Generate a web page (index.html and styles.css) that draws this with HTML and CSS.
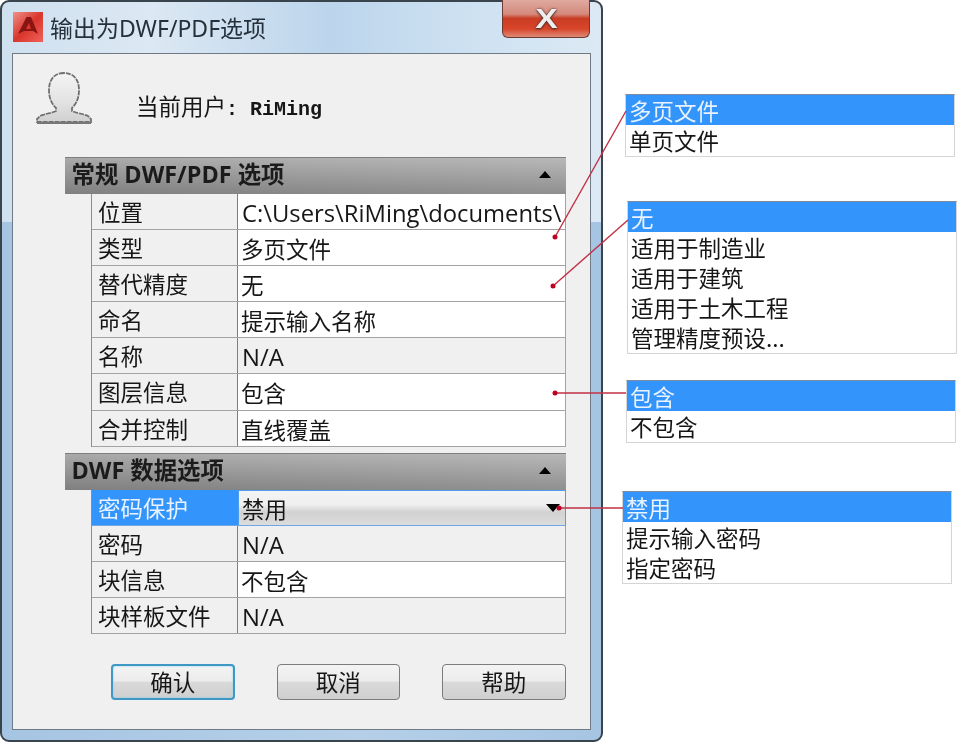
FILE: index.html
```html
<!DOCTYPE html>
<html lang="zh-CN">
<head>
<meta charset="utf-8">
<title>输出为DWF/PDF选项</title>
<link rel="stylesheet" href="styles.css">
</head>
<body>
<div class="page">
  <div class="window">
    <div class="titlebar">
      <svg class="logo" width="30" height="30" viewBox="0 0 30 30">
        <defs><linearGradient id="lg" x1="0" y1="0" x2="1" y2="1"><stop offset="0" stop-color="#f0928a"/><stop offset=".5" stop-color="#d9362c"/><stop offset="1" stop-color="#f0615a"/></linearGradient></defs>
        <rect width="30" height="30" fill="url(#lg)"/>
        <path d="M5 22 L13.5 5 L18 5 L25 22 L20 19 L11 19Z" fill="#8a1414"/>
        <path d="M13 17 L16 11 L18 17Z" fill="#d9362c"/>
      </svg>
      <span class="title">输出为DWF/PDF选项</span>
      <div class="close"><span class="close-x">X</span></div>
    </div>
    <div class="panel">
      <div class="user">
        <svg class="avatar" width="56" height="54" viewBox="0 0 56 54">
          <defs><linearGradient id="av" x1="0" y1="0" x2="0" y2="1"><stop offset="0" stop-color="#f4f4f4"/><stop offset=".6" stop-color="#e2e2e2"/><stop offset="1" stop-color="#d0d0d0"/></linearGradient></defs>
          <path d="M28 1 C18 1 13 8 13 18 C13 28 17 33 20 36 L20 39 C16 41 8 42 4 44 L1 47 L1 50 L55 50 L55 47 L52 44 C48 42 40 41 36 39 L36 36 C39 33 43 28 43 18 C43 8 38 1 28 1Z" fill="url(#av)" stroke="#707070" stroke-width="1.8" stroke-dasharray="5 1"/>
          <rect x="1" y="50" width="54" height="2" fill="#777"/>
        </svg>
        <div class="user-text">当前用户<span class="mono">: RiMing</span></div>
      </div>

      <section class="group">
        <div class="group-head"><span>常规 DWF/PDF 选项</span><i class="tri-up"></i></div>
        <div class="rows">
          <div class="row"><div class="k">位置</div><div class="v clip"><span class="lat">C:\Users\RiMing\documents\</span></div></div>
          <div class="row"><div class="k">类型</div><div class="v">多页文件</div></div>
          <div class="row"><div class="k">替代精度</div><div class="v">无</div></div>
          <div class="row"><div class="k">命名</div><div class="v">提示输入名称</div></div>
          <div class="row"><div class="k">名称</div><div class="v off"><span class="lat">N/A</span></div></div>
          <div class="row"><div class="k">图层信息</div><div class="v">包含</div></div>
          <div class="row"><div class="k">合并控制</div><div class="v">直线覆盖</div></div>
        </div>
      </section>

      <section class="group second">
        <div class="group-head"><span>DWF 数据选项</span><i class="tri-up"></i></div>
        <div class="rows">
          <div class="row active"><div class="k">密码保护</div><div class="v">禁用<i class="tri-down"></i></div></div>
          <div class="row"><div class="k">密码</div><div class="v off"><span class="lat">N/A</span></div></div>
          <div class="row"><div class="k">块信息</div><div class="v">不包含</div></div>
          <div class="row"><div class="k">块样板文件</div><div class="v off"><span class="lat">N/A</span></div></div>
        </div>
      </section>

      <div class="buttons">
        <button class="btn primary">确认</button>
        <button class="btn">取消</button>
        <button class="btn">帮助</button>
      </div>
    </div>
  </div>

  <div class="callouts">
    <ul class="list l1"><li class="sel">多页文件</li><li>单页文件</li></ul>
    <ul class="list l2"><li class="sel">无</li><li>适用于制造业</li><li>适用于建筑</li><li>适用于土木工程</li><li>管理精度预设...</li></ul>
    <ul class="list l3"><li class="sel">包含</li><li>不包含</li></ul>
    <ul class="list l4"><li class="sel">禁用</li><li>提示输入密码</li><li>指定密码</li></ul>
  </div>

  <svg class="leaders" width="957" height="743" viewBox="0 0 957 743">
    <g stroke="#c23044" stroke-width="1.4" fill="none">
      <path d="M555 237 L626 111"/>
      <path d="M553 286 L628 220"/>
      <path d="M555 393 L626 393"/>
      <path d="M559 508 L623 508"/>
    </g>
    <g fill="#c00020">
      <circle cx="555" cy="237" r="2.5"/>
      <circle cx="553" cy="286" r="2.5"/>
      <circle cx="555" cy="393" r="2.5"/>
      <circle cx="559" cy="508" r="2.5"/>
    </g>
  </svg>
</div>
</body>
</html>
```
FILE: styles.css
```css
* { box-sizing: border-box; }
html, body { margin: 0; padding: 0; background: #fff; }
body { font-family: "Noto Sans CJK SC", sans-serif; color: #161616; }
.page { position: relative; width: 957px; height: 743px; display: flex; overflow: hidden; filter: blur(0.35px); }

.window {
  position: relative;
  flex: none;
  width: 603px;
  height: 742px;
  border: 2px solid #39444d;
  border-radius: 9px;
  padding: 0 10px;
  background:
    linear-gradient(90deg, #cfe0ef 0, #dce8f3 25%, #bcd5ec 55%, #cfe2f2 80%, #dce9f4 100%) top / 100% 220px no-repeat,
    linear-gradient(90deg, #a6c5e3, #b5cfe8 60%, #a6c5e3);
}
.titlebar { display: flex; align-items: center; height: 51px; padding: 0 0 1px 1px; }
.logo { flex: none; }
.title { margin-left: 7px; font-size: 23px; color: #26303a; font-family: "Noto Sans", "Noto Sans CJK SC", sans-serif; }
.close {
  position: absolute;
  top: -2px;
  right: 11px;
  width: 88px;
  height: 38px;
  border: 1.5px solid #6d3a34;
  border-top: 0;
  border-radius: 0 0 6px 6px;
  background: linear-gradient(180deg, #dfa99f 0, #d58a7c 38%, #c93c24 50%, #d8452a 78%, #dc8a78 100%);
  display: flex;
  align-items: center;
  justify-content: center;
}
.close-x {
  font: bold 28px/1 "Liberation Sans", sans-serif;
  color: #eeeeee;
  text-shadow: 0 0 2px #4a2a26, 0 1px 2px #4a2a26;
  transform: scaleX(1.2);
}

.panel {
  height: 677px;
  border: 1.5px solid #6e7b86;
  background: #f0f0f0;
  padding: 0 24px 0 52px;
  display: flex;
  flex-direction: column;
}
.user { display: flex; align-items: flex-start; height: 103px; margin-left: -29px; padding-top: 18px; }
.avatar { flex: none; }
.user-text { margin-left: 44px; margin-top: 17px; font-size: 22.5px; line-height: 32px; white-space: pre; }
.mono { font-family: "Liberation Mono", monospace; font-size: 20px; font-weight: 700; }

.group-head {
  height: 37px;
  display: flex;
  align-items: center;
  justify-content: space-between;
  padding: 0 15px 6px 6.5px;
  font-weight: 700;
  font-size: 23.4px;
  color: #1b1b1b;
  font-family: "Open Sans", "Noto Sans CJK SC", sans-serif;
  border-top: 1px solid #7e7e7e;
  background:
    linear-gradient(90deg, rgba(0,0,0,.05), rgba(255,255,255,.08)),
    linear-gradient(180deg, #b2b2b2, #868686);
}
.tri-up { margin-top: 3px; border: 6px solid transparent; border-top: 0; border-bottom: 7px solid #000; }
.rows { margin-left: 26px; border-left: 1.5px solid #8e8e8e; }
.row {
  display: grid;
  grid-template-columns: 146px 1fr;
  height: 36.1px;
  border-bottom: 1.5px solid #a3a3a3;
  font-size: 22.5px;
}
.k { padding-left: 6px; line-height: 34px; background: #f0f0f0; border-right: 1.5px solid #7e7e7e; white-space: nowrap; }
.v { position: relative; padding-left: 3px; line-height: 36px; background: #fff; border-right: 1.5px solid #a3a3a3; white-space: nowrap; overflow: hidden; }
.v.off { background: #f0f0f0; }
.lat { margin-left: 1px; font-family: "Open Sans", sans-serif; font-size: 23.8px; }
.second { margin-top: 6px; }
.row.active { border-bottom-color: #6fa6e6; }
.row.active .k { background: #3394fb; color: #e8f3ff; border-right-color: #3394fb; }
.row.active .v {
  background: linear-gradient(180deg, #f4f4f4 0, #efefef 40%, #d2d2d2 62%, #dcdcdc 100%);
  border: 1.5px solid #4d9cf0;
  border-bottom: 0;
  line-height: 35px;
}
.tri-down { position: absolute; right: 5px; top: 13px; border: 7.5px solid transparent; border-bottom: 0; border-top: 8px solid #000; }

.buttons { display: flex; gap: 42px; margin-top: 30px; margin-left: 46px; }
.btn {
  flex: none;
  width: 123.5px;
  height: 36px;
  border: 1.5px solid #7c7c7c;
  border-radius: 4px;
  font-size: 22.5px;
  line-height: 30px;
  padding: 0 0 3px;
  color: #161616;
  font-family: "Noto Sans CJK SC", sans-serif;
  background: linear-gradient(180deg, #f4f4f4 0, #ececec 46%, #d9d9d9 52%, #cfcfcf 100%);
}
.btn.primary { border: 2px solid #3f97c6; box-shadow: inset 0 0 2px #7fd0f0; }

.callouts { flex: none; width: 354px; display: flex; flex-direction: column; }
.list {
  margin: 0;
  padding: 0 0 1px;
  list-style: none;
  width: 330px;
  background: #fff;
  border: 1px solid #d5d5d5;
  border-top: 1.5px solid #7e8ba0;
  font-size: 22.5px;
  font-family: "Noto Sans CJK SC", sans-serif;
}
.list li { height: 30px; line-height: 31px; padding-left: 3px; white-space: nowrap; }
.list .sel { background: #3394fb; color: #e8f3ff; }
.l1 { margin: 94px 0 0 22px; }
.l2 { margin: 43.5px 0 0 24px; }
.l3 { margin: 26.5px 0 0 23px; }
.l4 { margin: 47.5px 0 0 19px; }

.leaders { position: absolute; left: 0; top: 0; pointer-events: none; }
```
